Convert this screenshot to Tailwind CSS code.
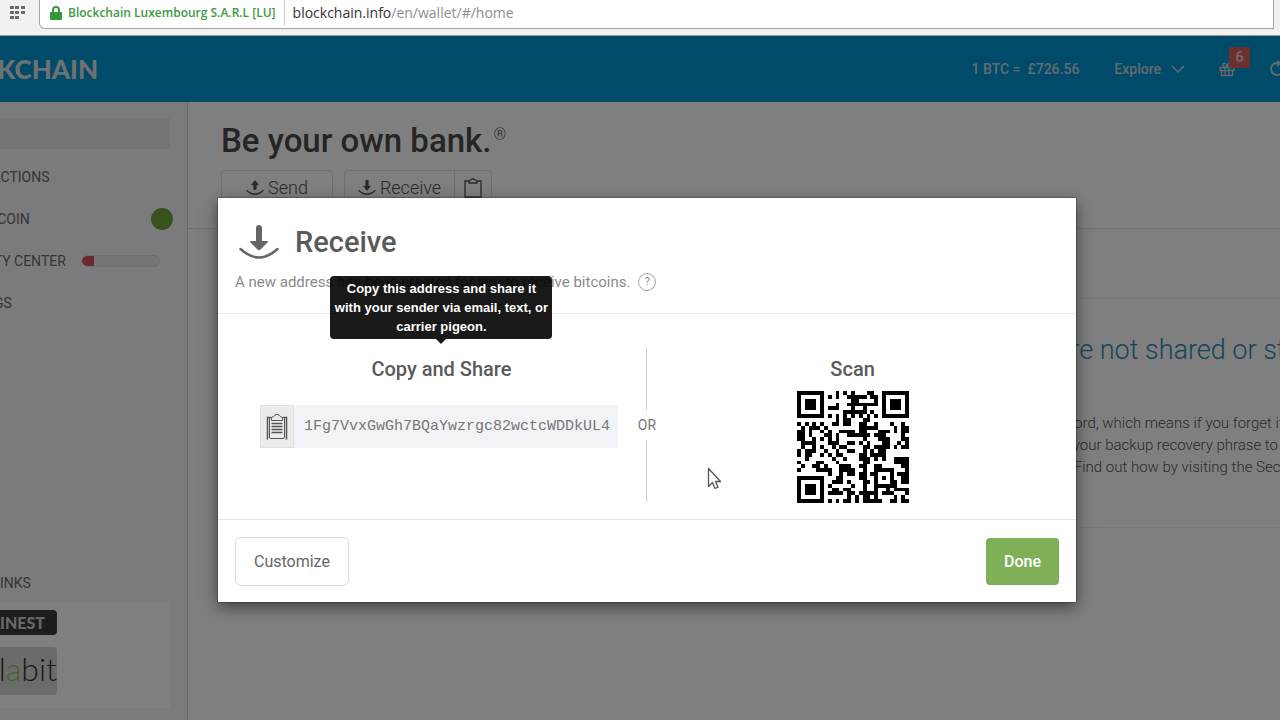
<!DOCTYPE html>
<html lang="en">
<head>
    <meta charset="UTF-8">
    <meta name="viewport" content="width=device-width, initial-scale=1.0">
    <title>Blockchain Wallet - Receive</title>
    <script src="https://cdn.jsdelivr.net/npm/@tailwindcss/browser@4"></script>
</head>
<body class="h-screen flex flex-col overflow-hidden bg-white font-['Roboto',sans-serif] text-[#5a5a5a]">

    <!-- Browser address bar -->
    <div class="h-9 shrink-0 flex items-start bg-[#f1f1f1] border-b border-[#9a9a9a] pl-2.5">
        <button type="button" aria-label="Apps" class="mt-1.5 mr-[13px]">
            <svg class="w-4 h-3.5" viewBox="0 0 16 14" fill="#6b6b6b">
                <path d="M0 0h4v3H0zM5 0h4v3H5zM11 0h4v3h-4zM0 5h4v3H0zM5 5h4v3H5zM11 5h4v3h-4zM0 10h4v3H0zM5 10h4v3H5z"/>
            </svg>
        </button>
        <div class="flex-1 h-[29px] mr-1.5 flex items-center bg-white border-x border-b border-[#a5a5a5] rounded-bl-md pl-2.5 pb-0.5 font-['Open_Sans',sans-serif]">
            <svg class="w-3 h-3.5 mr-1.5" viewBox="0 0 12 14">
                <path d="M3 7V4a3 3 0 0 1 6 0v3" fill="none" stroke="#35973a" stroke-width="2"/>
                <rect x="0" y="6" width="12" height="8" rx="1" fill="#35973a"/>
            </svg>
            <span class="text-xs font-semibold text-[#3c9a41] whitespace-nowrap">Blockchain Luxembourg S.A.R.L [LU]</span>
            <span class="w-px h-6 mx-2 bg-[#c8c8c8]"></span>
            <span class="text-sm text-[#333333] whitespace-nowrap">blockchain.info<span class="text-[#8d8d8d]">/en/wallet/#/home</span></span>
        </div>
    </div>

    <div class="relative flex-1 min-h-0 overflow-hidden">
        <!-- Wallet page, scrolled sideways -->
        <div class="h-full -ml-[88px] flex flex-col">
            <header class="h-[66px] shrink-0 flex items-center justify-between bg-[#0096d2] text-sm font-medium text-[#c4d6e0]">
                <a href="#" class="w-[186px] pt-0.5 text-right font-['Lato',sans-serif] font-black text-[26px] text-[#dde2e4]">BLOCKCHAIN</a>
                <nav class="flex items-center whitespace-nowrap -mr-[5px]">
                    <span class="mr-[35px]">1 BTC = &nbsp;£726.56</span>
                    <a href="#" class="flex items-center gap-2.5 mr-[34px]">Explore
                        <svg class="w-3.5 h-2" viewBox="0 0 14 8" fill="none" stroke="currentColor" stroke-width="1.5"><path d="M1 1l6 6 6-6"/></svg>
                    </a>
                    <a href="#" aria-label="What's new" class="relative mr-[34px]">
                        <svg class="w-4 h-4" viewBox="0 0 16 16" fill="none" stroke="currentColor" stroke-width="1.3">
                            <path d="M1 6.500h14v3H1zM2.500 9.500h11v5h-11zM6 6.500v8M10 6.500v8M8 6.500C5 6 3 4 4.500 2.500S8 4 8 6.500c0-2.500 2-5.500 3.500-4S11 6 8 6.500z"/>
                        </svg>
                        <span class="absolute left-2.5 -top-3.5 w-[21px] h-[21px] flex items-center justify-center bg-[#d9605f] text-[15px] text-[#e6d0d0]">6</span>
                    </a>
                    <a href="#" aria-label="Refresh">
                        <svg class="w-4 h-4" viewBox="0 0 16 16" fill="none" stroke="currentColor" stroke-width="2"><path d="M14 8a6 6 0 1 1-5-6M8 0l3 2-3 3"/></svg>
                    </a>
                </nav>
            </header>

            <div class="flex-1 min-h-0 flex">
                <aside class="w-[276px] shrink-0 flex flex-col px-[17px] bg-[#f6f6fb] border-r border-[#d8d8da] text-sm text-[#6b6b6e]">
                    <a href="#" aria-label="Home" class="mt-4 h-[31px] bg-[#ebebeb]"></a>
                    <a href="#" class="h-[42px] mt-[7px] pl-[18px] flex items-center">TRANSACTIONS</a>
                    <a href="#" class="h-[42px] pl-[18px] flex items-center justify-between">BUY BITCOIN
                        <span class="w-[22px] h-[22px] -mr-[3px] rounded-full bg-[#6fa53d]"></span>
                    </a>
                    <a href="#" class="h-[42px] pl-[18px] pr-2.5 flex items-center justify-between">SECURITY CENTER
                        <span class="w-[78px] h-3 rounded-full overflow-hidden bg-[#ebebeb] border-y border-r border-[#dedede]">
                            <span class="block w-3 h-full bg-[#d9535f]"></span>
                        </span>
                    </a>
                    <a href="#" class="h-[42px] pl-[18px] flex items-center">SETTINGS</a>
                    <h3 class="mt-auto mb-[9px]">PARTNER LINKS</h3>
                    <div class="h-[106px] mb-3 pt-2 bg-white flex flex-col gap-3">
                        <a href="#" class="w-32 h-[25px] pr-3 flex items-center justify-end rounded bg-[#3b3b3b] font-['Lato',sans-serif] font-black text-base text-[#d0d0d0]">CHAINEST</a>
                        <a href="#" class="w-32 h-12 pb-1 flex items-center justify-end rounded bg-[#d6d6d6] font-['Lato',sans-serif] font-light text-[32px] text-[#333333]">coinl<span class="text-[#8cc356]">a</span>bit</a>
                    </div>
                </aside>

                <main class="flex-1 min-w-0 overflow-hidden">
                    <div class="h-[127px] px-[33px] pt-[17px] border-b border-[#dcdcdc]">
                        <h1 class="flex items-start gap-0.5 text-[33px] leading-[44px] font-medium text-[#4a4a4a]">Be your own bank.<span class="text-base leading-8 font-light">®</span></h1>
                        <div class="flex gap-[11px] mt-[7px] font-light text-lg text-[#555555]">
                            <button type="button" class="w-[112px] h-9 flex items-center justify-center gap-1 border border-[#e0e0e0] rounded">
                                <svg class="w-[18px] h-4" viewBox="0 0 40 36" fill="none" stroke="currentColor">
                                    <path d="M20 22V8" stroke-width="7"/><path d="M11 12l9-12 9 12z" fill="currentColor" stroke="none"/><path d="M1 23q19 18 38 0" stroke-width="3"/>
                                </svg>Send
                            </button>
                            <div class="flex border border-[#e0e0e0] rounded">
                                <button type="button" class="w-[110px] flex items-center justify-center gap-1 border-r border-[#e0e0e0]">
                                    <svg class="w-[18px] h-4" viewBox="0 0 40 36" fill="none" stroke="currentColor">
                                        <path d="M20 0v14" stroke-width="7"/><path d="M11 13l9 12 9-12z" fill="currentColor" stroke="none"/><path d="M1 23q19 18 38 0" stroke-width="3"/>
                                    </svg>Receive
                                </button>
                                <button type="button" aria-label="Copy address" class="w-9 flex items-center justify-center">
                                    <svg class="w-[18px] h-5" viewBox="0 0 18 20" fill="none" stroke="currentColor" stroke-width="1.3">
                                        <path d="M5 3H1v16h16V3h-4M5 5V3l3-2h2l3 2v2z"/>
                                    </svg>
                                </button>
                            </div>
                        </div>
                    </div>
                    <div class="mt-[69px] ml-[34px] h-[230px] border-y border-[#f0f0f0] whitespace-nowrap font-light">
                        <h2 class="pl-[699px] pt-[33px] text-[27px] leading-9 text-[#2a8bb8]">Your funds are not shared or stored</h2>
                        <div class="pl-[699px] mt-11 text-[15px] leading-[22px] text-[#555555]">
                            <p>We can't see the password, which means if you forget it</p>
                            <p>so you will need to use your backup recovery phrase to ensure</p>
                            <p>access to your wallets. Find out how by visiting the Security</p>
                        </div>
                    </div>
                </main>
            </div>
        </div>

        <!-- Backdrop and dialog -->
        <div class="absolute inset-0 flex items-start justify-center bg-black/50 pt-[162px] pl-3.5">
            <section role="dialog" aria-labelledby="dialog-title" class="w-full max-w-[858px] bg-white shadow-[0_0_0_1px_rgba(0,0,0,0.2),0_5px_15px_rgba(0,0,0,0.5)]">
                <div class="h-[116px] px-[17px] pt-[27px] border-b border-[#e8e8e8]">
                    <h2 id="dialog-title" class="flex items-center gap-4 pl-1 h-9 text-[29px] font-medium">
                        <svg class="w-10 h-9" viewBox="0 0 40 36" fill="none" stroke="#666666" stroke-linecap="round">
                            <path d="M20 3v13" stroke-width="6"/><path d="M11.500 16h17q1 0 0 1.500l-7 7q-1.500 1.500-3 0l-7-7q-1-1.500 0-1.500z" fill="#666666" stroke="none"/><path d="M1.500 24q18.500 17 37 0" stroke-width="2.500"/>
                        </svg>
                        Receive
                    </h2>
                    <p class="flex items-center gap-2 mt-[9px] text-[15px] leading-6 whitespace-nowrap text-[#8a8a8a]">A new address has been created for you to receive bitcoins.
                        <button type="button" aria-label="Help" class="w-[18px] h-[18px] rounded-full border border-[#a5a5a5] flex items-center justify-center text-[11px] text-[#888888]">?</button>
                    </p>
                </div>

                <div class="h-[206px] px-[17px] grid grid-cols-[1fr_auto_1fr] border-b border-[#e8e8e8]">
                    <div class="-mr-2.5 pt-[41px] px-[25px] flex flex-col items-center">
                        <div class="relative">
                            <label for="address" class="text-xl leading-7 font-medium">Copy and Share</label>
                            <div role="tooltip" class="absolute left-1/2 -translate-x-1/2 bottom-full mb-[11px] pb-[5px]">
                                <div class="w-[222px] py-[3px] px-0.5 rounded bg-black/90 text-center text-white font-['Liberation_Sans',sans-serif] font-bold text-[13px] leading-[19px]">Copy this address and share it with your sender via email, text, or carrier pigeon.</div>
                                <svg class="absolute left-1/2 -translate-x-1/2 bottom-0 w-2.5 h-[5px]" viewBox="0 0 10 5" fill="#191919"><path d="M0 0h10L5 5z"/></svg>
                            </div>
                        </div>
                        <div class="self-start flex w-[358px] h-[43px] mt-[22px] bg-[#f1f3f7]">
                            <button type="button" aria-label="Copy" class="w-[34px] shrink-0 flex items-center justify-center bg-[#ececec] border border-[#e2e2e2]">
                                <svg class="w-[22px] h-7" viewBox="0 0 22 28" fill="none" stroke="#555555">
                                    <path d="M5 4.500H1.500v22M17 4.500h3.500v22" stroke-width="1.500"/>
                                    <path d="M6 4.500H4q-.5 0-.5 1V24q0 1.500 1.500 1.500h12q1.500 0 1.500-1.500V5.500q0-1-.5-1h-2"/>
                                    <path d="M5.500 7.500V5.500q0-1.500 2-2 1-.5 1.500-1.500 2-1.500 4 0 .5 1 1.500 1.500 2 .5 2 2v2z" fill="#ececec"/>
                                    <path d="M5.500 10.500h11M5.500 13.500h11M5.500 16.500h11M5.500 19.500h11" stroke-width="1.500"/>
                                </svg>
                            </button>
                            <input id="address" type="text" readonly value="1Fg7VvxGwGh7BQaYwzrgc82wctcWDDkUL4" class="flex-1 min-w-0 pl-2.5 pt-0.5 bg-transparent outline-none font-['Liberation_Mono',monospace] text-[15px] text-[#777777]">
                        </div>
                    </div>

                    <div class="flex flex-col items-center pt-[34px] pb-[17px] text-sm">
                        <span class="w-px flex-1 bg-[#cccccc]"></span>
                        <span class="leading-[30px] text-[#777777]">OR</span>
                        <span class="w-px flex-1 bg-[#cccccc]"></span>
                    </div>

                    <div class="-ml-2.5 pt-[41px] flex flex-col items-center">
                        <h3 class="text-xl leading-7 font-medium">Scan</h3>
                        <svg id="qr" role="img" aria-label="Address QR code" class="w-28 h-28 mt-2" viewBox="0 0 29 29" shape-rendering="crispEdges"></svg>
                    </div>
                </div>

                <div class="px-[17px] pt-[17px] pb-4 flex items-center justify-between text-base">
                    <button type="button" class="h-[49px] px-[18px] border border-[#dddddd] rounded-md text-[#666666]">Customize</button>
                    <button type="button" class="h-[47px] px-[18px] rounded bg-[#7fb058] text-white font-medium">Done</button>
                </div>
            </section>
        </div>

        <!-- Mouse pointer -->
        <svg class="absolute left-[707px] top-[431px] w-3.5 h-6" viewBox="0 0 14 24" fill="#ffffff" stroke="#555555" stroke-width="1.3" stroke-linejoin="round">
            <path d="M1.500 1.500v18l4-4 2.500 6 3-1.300-2.500-5.700h5z"/>
        </svg>
    </div>

    <script>
        // QR code, version 3, level M, mask 0: one block of 44 data + 26 check bytes
        const SIZE = 29, DATA = 44, ECC = 26;

        function gfMul(a, b) {
            let r = 0;
            for (let i = 7; i >= 0; i--) {
                r = (r << 1) ^ ((r >> 7) * 0x11d);
                r ^= ((b >> i) & 1) * a;
            }
            return r;
        }

        function checkBytes(data) {
            const gen = new Array(ECC).fill(0);
            gen[ECC - 1] = 1;
            let root = 1;
            for (let i = 0; i < ECC; i++) {
                for (let j = 0; j < ECC; j++) {
                    gen[j] = gfMul(gen[j], root);
                    if (j + 1 < ECC) gen[j] ^= gen[j + 1];
                }
                root = gfMul(root, 2);
            }
            const rem = new Array(ECC).fill(0);
            for (const b of data) {
                const f = b ^ rem.shift();
                rem.push(0);
                gen.forEach((g, i) => rem[i] ^= gfMul(g, f));
            }
            return rem;
        }

        function qrModules(text) {
            let bits = '0100' + text.length.toString(2).padStart(8, '0');
            for (const c of text) bits += c.charCodeAt(0).toString(2).padStart(8, '0');
            bits = (bits + '0000').slice(0, DATA * 8);
            const bytes = bits.match(/.{8}/g).map(b => parseInt(b, 2));
            const all = bytes.concat(checkBytes(bytes));

            const m = Array.from({ length: SIZE }, () => new Array(SIZE).fill(null));
            for (let i = 0; i < SIZE; i++) m[6][i] = m[i][6] = i % 2 === 0;
            const square = (cx, cy, r, light) => {
                for (let y = -r; y <= r; y++) for (let x = -r; x <= r; x++) {
                    const row = m[cy + y];
                    if (!row || cx + x < 0 || cx + x >= SIZE) continue;
                    row[cx + x] = !light.includes(Math.max(Math.abs(x), Math.abs(y)));
                }
            };
            square(3, 3, 4, [2, 4]);
            square(SIZE - 4, 3, 4, [2, 4]);
            square(3, SIZE - 4, 4, [2, 4]);
            square(22, 22, 2, [1]);

            const fmt = 0x5412, bit = i => ((fmt >> i) & 1) === 1;
            for (let i = 0; i < 6; i++) m[i][8] = bit(i);
            m[7][8] = bit(6); m[8][8] = bit(7); m[8][7] = bit(8);
            for (let i = 9; i < 15; i++) m[8][14 - i] = bit(i);
            for (let i = 0; i < 8; i++) m[8][SIZE - 1 - i] = bit(i);
            for (let i = 8; i < 15; i++) m[SIZE - 15 + i][8] = bit(i);
            m[SIZE - 8][8] = true;

            let n = 0;
            for (let right = SIZE - 1; right >= 1; right -= 2) {
                if (right === 6) right = 5;
                for (let v = 0; v < SIZE; v++) for (let j = 0; j < 2; j++) {
                    const x = right - j;
                    const y = ((right + 1) & 2) === 0 ? SIZE - 1 - v : v;
                    if (m[y][x] !== null) continue;
                    const d = n < all.length * 8 ? (all[n >> 3] >> (7 - (n & 7))) & 1 : 0;
                    n++;
                    m[y][x] = (d === 1) !== ((x + y) % 2 === 0);
                }
            }
            return m;
        }

        let d = '';
        qrModules('bitcoin:' + document.getElementById('address').value).forEach((row, y) =>
            row.forEach((on, x) => { if (on) d += `M${x} ${y}h1v1h-1z`; }));
        document.getElementById('qr').innerHTML = `<path d="${d}"/>`;
    </script>
</body>
</html>
